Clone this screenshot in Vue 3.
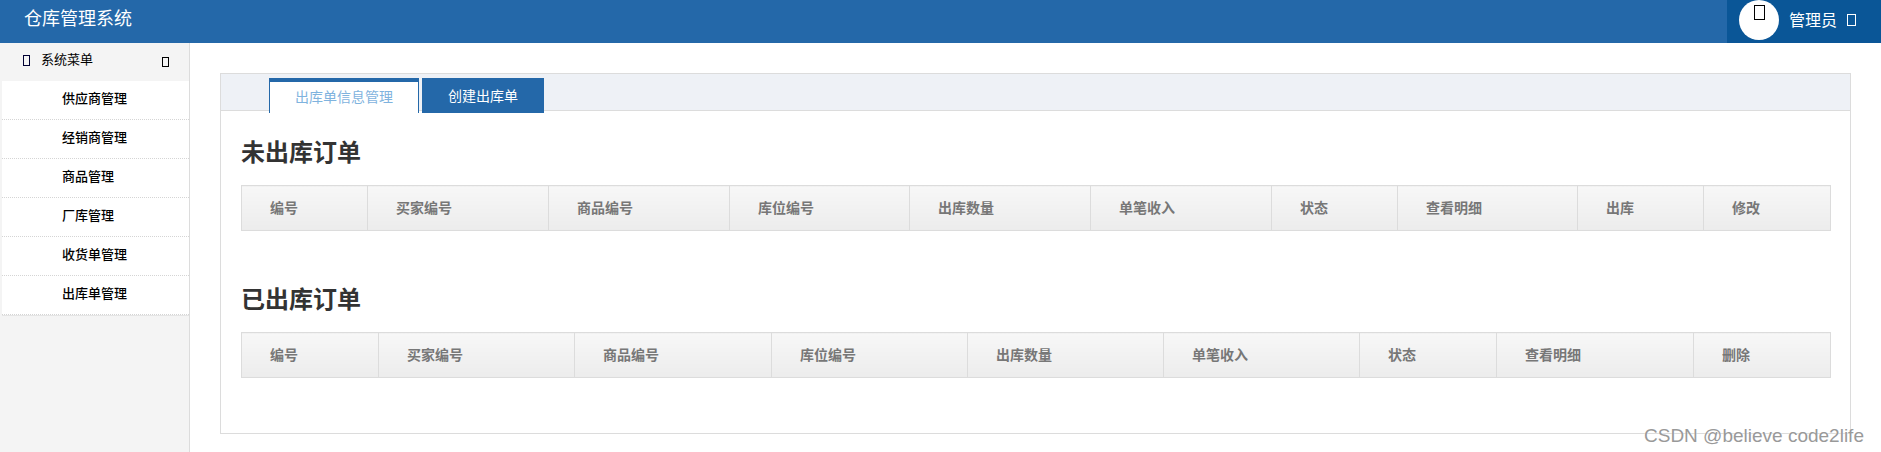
<script setup>
const menus = ["供应商管理", "经销商管理", "商品管理", "厂库管理", "收货单管理", "出库单管理"];

const pendingCols = [
  { name: "编号", width: 126 },
  { name: "买家编号", width: 181 },
  { name: "商品编号", width: 181 },
  { name: "库位编号", width: 180 },
  { name: "出库数量", width: 181 },
  { name: "单笔收入", width: 181 },
  { name: "状态", width: 126 },
  { name: "查看明细", width: 180 },
  { name: "出库", width: 126 },
  { name: "修改", width: 127 },
];

const doneCols = [
  { name: "编号", width: 137 },
  { name: "买家编号", width: 196 },
  { name: "商品编号", width: 197 },
  { name: "库位编号", width: 196 },
  { name: "出库数量", width: 196 },
  { name: "单笔收入", width: 196 },
  { name: "状态", width: 137 },
  { name: "查看明细", width: 197 },
  { name: "删除", width: 137 },
];

const sections = [
  { title: "未出库订单", cols: pendingCols },
  { title: "已出库订单", cols: doneCols },
];
</script>

<template>
  <div class="page">
    <header class="topbar">
      <div class="brand">仓库管理系统</div>
      <div class="user">
        <div class="avatar"><i class="tofu tofu-avatar"></i></div>
        <span class="username">管理员</span>
        <i class="tofu tofu-user"></i>
      </div>
    </header>

    <div class="body">
      <aside class="sidebar">
        <div class="menu-head">
          <i class="tofu tofu-menu"></i>
          <span class="menu-title">系统菜单</span>
          <i class="tofu tofu-arrow"></i>
        </div>
        <ul class="menu">
          <li v-for="item in menus" :key="item">{{ item }}</li>
        </ul>
      </aside>

      <main class="main">
        <div class="card">
          <div class="tabs">
            <div class="tab active">出库单信息管理</div>
            <div class="tab solid">创建出库单</div>
          </div>
          <div class="content">
            <section v-for="sec in sections" :key="sec.title" class="section">
              <h2>{{ sec.title }}</h2>
              <table>
                <colgroup>
                  <col v-for="c in sec.cols" :key="c.name" :style="{ width: c.width + 'px' }" />
                </colgroup>
                <thead>
                  <tr>
                    <th v-for="c in sec.cols" :key="c.name">{{ c.name }}</th>
                  </tr>
                </thead>
              </table>
            </section>
          </div>
        </div>
      </main>
    </div>

    <div class="watermark">CSDN @believe code2life</div>
  </div>
</template>

<style>
html,
body {
  margin: 0;
  background: #fff;
  overflow: hidden;
}
</style>

<style scoped>
.page {
  position: relative;
  width: 1881px;
  height: 452px;
  overflow: hidden;
  font-family: "Liberation Sans", "Noto Sans CJK SC", sans-serif;
}

.tofu {
  display: block;
  box-sizing: border-box;
  border: 1px solid #000;
  flex: none;
}

.topbar {
  height: 43px;
  background: #2468a9;
  display: flex;
  justify-content: space-between;
}

.brand {
  padding-left: 24px;
  font-size: 18px;
  line-height: 38px;
  color: #fff;
}

.user {
  width: 154px;
  box-sizing: border-box;
  padding-left: 12px;
  background: #0a5697;
  display: flex;
  align-items: flex-start;
  color: #fff;
}

.avatar {
  width: 40px;
  height: 40px;
  border-radius: 50%;
  background: #fff;
  padding: 5px 0 0 15px;
  box-sizing: border-box;
}

.tofu-avatar {
  width: 11px;
  height: 15px;
}

.username {
  margin-left: 10px;
  font-size: 16px;
  line-height: 41px;
}

.tofu-user {
  width: 9px;
  height: 12px;
  margin: 14px 0 0 10px;
  border-color: #fff;
}

.body {
  display: flex;
  height: 409px;
}

.sidebar {
  width: 190px;
  box-sizing: border-box;
  background: #f4f4f4;
  border-right: 1px solid #dcdcdc;
  padding-left: 2px;
}

.menu-head {
  height: 38px;
  display: flex;
  align-items: flex-start;
  padding-left: 21px;
}

.tofu-menu {
  width: 7px;
  height: 11px;
  margin-top: 12px;
  border-color: #000033;
}

.menu-title {
  margin-left: 11px;
  font-size: 13px;
  line-height: 34px;
  color: #000;
}

.tofu-arrow {
  width: 7px;
  height: 10px;
  margin: 14px 0 0 69px;
}

.menu {
  list-style: none;
  margin: 0;
  padding: 0;
  background: #fff;
  border-bottom: 1px solid #e4e4e4;
}

.menu li {
  height: 38px;
  line-height: 36px;
  padding-left: 60px;
  font-size: 13px;
  font-weight: 500;
  color: #000;
  border-bottom: 1px dotted #d5d5d5;
}

.main {
  flex: 1;
  padding: 30px 30px 0;
  min-width: 0;
}

.card {
  height: 361px;
  box-sizing: border-box;
  border: 1px solid #dcdcdc;
}

.tabs {
  height: 37px;
  box-sizing: border-box;
  background: #eef1f6;
  border-bottom: 1px solid #dcdcdc;
  padding: 4px 0 0 48px;
  display: flex;
  gap: 3px;
}

.tab {
  height: 35px;
  box-sizing: border-box;
  font-size: 14px;
  line-height: 37px;
  text-align: center;
}

.tab.active {
  width: 150px;
  background: #fff;
  color: #7fb3de;
  border: 1px solid #2468a9;
  border-top-width: 4px;
  border-bottom: none;
  line-height: 31px;
}

.tab.solid {
  width: 122px;
  background: #2468a9;
  color: #fff;
}

.content {
  padding: 0 20px;
}

.section {
  height: 147px;
}

h2 {
  margin: 0;
  padding-top: 25px;
  height: 49px;
  font-size: 24px;
  line-height: 34px;
  font-weight: bold;
  color: #333;
}

table {
  width: 1589px;
  table-layout: fixed;
  border-collapse: collapse;
}

th {
  height: 45px;
  padding: 0 0 2px 28px;
  box-sizing: border-box;
  border: 1px solid #dcdcdc;
  background: linear-gradient(#f7f7f7, #ececec);
  font-size: 14px;
  font-weight: bold;
  color: #777;
  text-align: left;
}

.watermark {
  position: absolute;
  left: 1644px;
  top: 425px;
  font-size: 19px;
  line-height: 22px;
  color: #999;
  text-shadow: 0 0 2px #fff;
  white-space: nowrap;
}
</style>
